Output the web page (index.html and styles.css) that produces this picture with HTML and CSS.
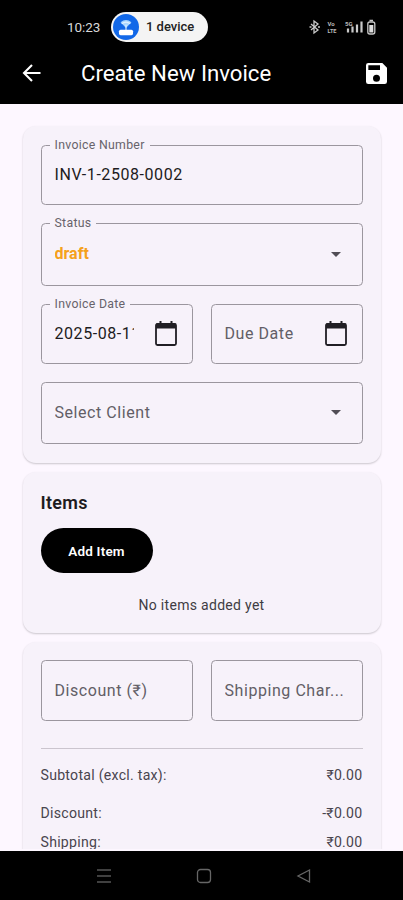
FILE: index.html
```html
<!DOCTYPE html>
<html lang="en">
<head>
<meta charset="utf-8">
<title>Create New Invoice</title>
<link rel="stylesheet" href="styles.css">
</head>
<body>
<div class="phone">
  <header class="top">
    <div class="statusbar">
      <span class="clock">10:23</span>
      <div class="pill">
        <svg width="26" height="26" viewBox="0 0 24 24"><circle cx="12" cy="12" r="12" fill="#1268e8"/><path d="M7 7.500Q12 3.500 17 7.500L12 13Z" fill="#a9d6ff"/><path d="M8 9q4-3 8 0M12 10v6" stroke="#dff0ff" stroke-width="1" fill="none"/><rect x="5.500" y="14.500" width="13" height="5" rx="1.500" fill="#fff"/></svg>
        <span>1 device</span>
      </div>
      <svg class="signals" width="70" height="18" viewBox="0 0 70 18" fill="none" stroke="#c9c9c9" stroke-width="1.300">
        <path d="M2 6l7 6-4 3V3l4 3-7 6M.5 9h2M9 9h2"/>
        <g fill="#bbb" stroke="none" font-family="Roboto" font-weight="700" font-size="6"><text x="18.500" y="8">Vo</text><text x="18.500" y="14.500" textLength="9" lengthAdjust="spacingAndGlyphs">LTE</text><text x="36" y="8">5G</text></g>
        <path d="M39 14.500v-4M43.500 14.500v-6M48 14.500v-8M52.500 14.500v-11" stroke-width="2.200"/>
        <rect x="58.800" y="4" width="7" height="12" rx="2"/><path d="M60.500 2.500h3.500" stroke-width="1.500"/><rect x="60.300" y="7" width="4" height="7.500" fill="#ddd" stroke="none"/>
      </svg>
    </div>
    <div class="appbar">
      <svg class="back" width="20" height="18" viewBox="0 0 20 18" fill="none" stroke="#fff" stroke-width="2.100"><path d="M18.500 9H2.500M10 1L2 9l8 8"/></svg>
      <h1>Create New Invoice</h1>
      <svg class="save" width="21" height="21" viewBox="3 3 18 18" fill="#fff"><path d="M17 3H5a2 2 0 0 0-2 2v14a2 2 0 0 0 2 2h14a2 2 0 0 0 2-2V7zm-5 16a3 3 0 1 1 0-6 3 3 0 0 1 0 6zm3-10H5V5h10z"/></svg>
    </div>
  </header>

  <main class="content">
    <section class="card details">
      <div class="field"><span class="label">Invoice Number</span><span class="value">INV-1-2508-0002</span></div>
      <div class="field tall"><span class="label">Status</span><span class="value draft">draft</span><i class="caret"></i></div>
      <div class="pair">
        <div class="field"><span class="label">Invoice Date</span><span class="value date">2025-08-11</span>
          <svg class="cal" width="24" height="26" viewBox="0 0 24 26"><path d="M6.500 0v4M17.500 0v4" stroke="#201e24" stroke-width="2"/><rect x="2" y="3" width="20" height="21" rx="1.500" fill="none" stroke="#201e24" stroke-width="1.800"/><path d="M2 2.500h20v5H2z" fill="#201e24"/></svg></div>
        <div class="field"><span class="value hint">Due Date</span>
          <svg class="cal" width="24" height="26" viewBox="0 0 24 26"><path d="M6.500 0v4M17.500 0v4" stroke="#201e24" stroke-width="2"/><rect x="2" y="3" width="20" height="21" rx="1.500" fill="none" stroke="#201e24" stroke-width="1.800"/><path d="M2 2.500h20v5H2z" fill="#201e24"/></svg></div>
      </div>
      <div class="field tall"><span class="value hint">Select Client</span><i class="caret"></i></div>
    </section>

    <section class="card items">
      <h2>Items</h2>
      <button class="add">Add Item</button>
      <p class="empty">No items added yet</p>
    </section>

    <section class="card totals">
      <div class="pair">
        <div class="field"><span class="value hint">Discount (₹)</span></div>
        <div class="field"><span class="value hint">Shipping Char...</span></div>
      </div>
      <hr>
      <div class="row first"><span>Subtotal (excl. tax):</span><span class="amount">₹0.00</span></div>
      <div class="row second"><span>Discount:</span><span class="amount">-₹0.00</span></div>
      <div class="row"><span>Shipping:</span><span class="amount">₹0.00</span></div>
    </section>
  </main>

  <nav class="navbar">
    <svg width="16" height="16" viewBox="0 0 16 16" stroke="#555" stroke-width="1.300"><path d="M1 2h14M1 8h14M1 14h14"/></svg>
    <svg width="16" height="16" viewBox="0 0 16 16" fill="none" stroke="#666" stroke-width="1.300"><rect x="1.500" y="1.500" width="13" height="13" rx="3"/></svg>
    <svg width="16" height="16" viewBox="0 0 16 16" fill="none" stroke="#666" stroke-width="1.300"><path d="M13.500 2v12L2 8z"/></svg>
  </nav>
</div>
</body>
</html>
```
FILE: styles.css
```css
* { box-sizing: border-box; }
body { margin: 0; font-family: Roboto, "Noto Sans", sans-serif; color: #1d1b20; }
.phone { width: 403px; height: 900px; display: flex; flex-direction: column; overflow: hidden; background: #fdf7ff; }
.top { height: 104px; flex: none; background: #000; color: #fff; }
.statusbar { display: flex; align-items: center; height: 42px; padding: 11px 24px 0 67px; }
.clock { width: 44px; font-size: 13.5px; line-height: 30px; color: #d8d8d8; letter-spacing: -0.1px; }
.pill { display: flex; align-items: center; gap: 7px; width: 97px; height: 30px; padding-left: 2px; border-radius: 15px; background: #f4f4f4; color: #222; font-size: 13px; font-weight: 500; white-space: nowrap; }
.signals { margin-left: auto; }
.appbar { display: flex; align-items: center; height: 62px; padding: 0 16.5px 0 22px; }
h1 { flex: 1; margin: 0 0 0 39px; font-size: 22.2px; line-height: 28px; font-weight: 400; }
.content { flex: 1; min-height: 0; overflow: hidden; padding: 22px 22.5px 0; display: flex; flex-direction: column; gap: 9px; border-bottom: 2px solid #fdf7ff; }
.card { flex: none; padding: 19px 18px 0; border-radius: 13px; background: #f7f2fa; box-shadow: 0 1px 2px rgba(0,0,0,.2); }
.details { height: 337px; display: flex; flex-direction: column; gap: 18px; }
.field { position: relative; display: flex; align-items: center; height: 60px; padding: 0 13px; border: 1px solid #9b969e; border-radius: 4.5px; min-width: 0; }
.tall { height: 62.5px; }
.label { position: absolute; top: -9px; left: 8px; padding: 0 5px; background: #f7f2fa; color: #67636b; font-size: 12.3px; line-height: 17px; letter-spacing: 0.3px; }
.value { flex: 1; font-size: 16px; line-height: 22px; letter-spacing: 0.56px; white-space: nowrap; overflow: hidden; }
.draft { color: #f5a11c; font-weight: 700; letter-spacing: 0; }
.hint { color: #625e66; }
.date { flex: none; width: 79.5px; }
.caret { width: 0; height: 0; margin-right: 8px; border: 5.5px solid transparent; border-top-color: #514d55; border-bottom: 0; }
.pair { display: grid; grid-template-columns: 1fr 1fr; gap: 18px; }
.cal { flex: none; margin-left: auto; margin-right: 1px; }
.items { height: 161px; padding-top: 19px; }
h2 { margin: 0; font-size: 18px; line-height: 24px; font-weight: 600; letter-spacing: 0.3px; }
.add { display: block; width: 112px; height: 45px; margin-top: 13px; padding: 0; border: 0; border-radius: 23px; background: #000; color: #fff; font: 600 13.5px Roboto, sans-serif; letter-spacing: 0.2px; }
.empty { margin: 22px 0 0; text-align: center; font-size: 14px; line-height: 20px; letter-spacing: 0.3px; color: #3f3c43; }
.totals { height: 300px; padding-top: 18px; }
.totals .field { height: 61px; }
hr { height: 1px; margin: 27px 0 0; border: 0; background: #cbc5ce; }
.row { display: flex; justify-content: space-between; height: 29px; font-size: 14.1px; line-height: 20px; letter-spacing: 0.27px; color: #49454e; }
.first { height: 38px; margin-top: 16px; }
.navbar { flex: none; display: flex; justify-content: center; align-items: center; gap: 84px; height: 49px; padding-left: 4px; background: #000; }
```
